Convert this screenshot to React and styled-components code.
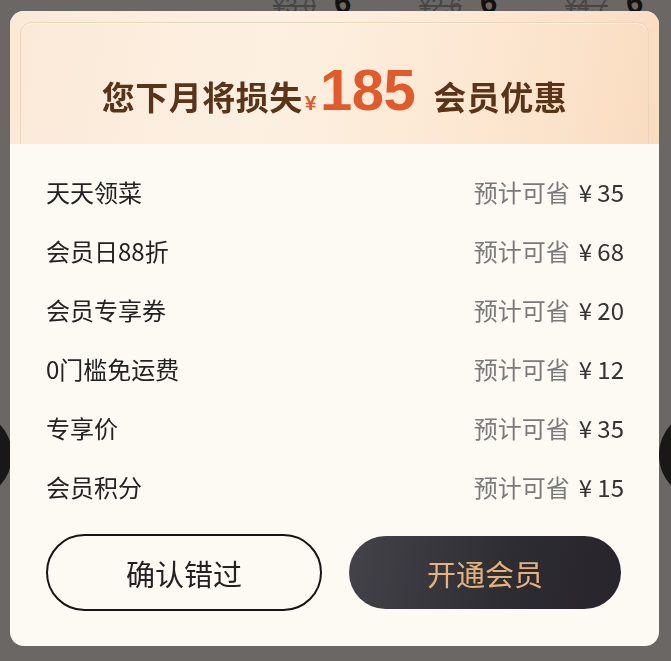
import React from 'react';
import styled, { createGlobalStyle } from 'styled-components';

const GlobalStyle = createGlobalStyle`
  html, body {
    margin: 0;
    padding: 0;
    background: #f6f1ec;
  }
  body {
    font-family: "Noto Sans CJK SC", "Noto Sans", sans-serif;
  }
  * {
    box-sizing: border-box;
  }
`;

const perks = [
  { name: '天天领菜', save: 35 },
  { name: '会员日88折', save: 68 },
  { name: '会员专享券', save: 20 },
  { name: '0门槛免运费', save: 12 },
  { name: '专享价', save: 35 },
  { name: '会员积分', save: 15 },
];

const prices = [
  { old: '¥3.0', now: '6元' },
  { old: '¥2.6', now: '6元' },
  { old: '¥4.7', now: '6元' },
];

const App = () => {
  return (
    <>
      <GlobalStyle />
      <Page>
        <PriceStrip>
          {prices.map((p, i) => (
            <PriceItem key={i}>
              <OldPrice>{p.old}</OldPrice>
              <NowPrice>{p.now}</NowPrice>
            </PriceItem>
          ))}
        </PriceStrip>
        <GoodsRow>
          <RoundButton />
          <RoundButton />
        </GoodsRow>
      </Page>

      <Mask>
        <Modal>
          <Header>
            <HeaderFrame>
              <Title>
                您下月将损失
                <Yen>¥</Yen>
                <Amount>185</Amount>
                会员优惠
              </Title>
            </HeaderFrame>
          </Header>

          <Body>
            <List>
              {perks.map((perk) => (
                <Row key={perk.name}>
                  <PerkName>{perk.name}</PerkName>
                  <Saving>
                    预计可省<SaveValue>¥ {perk.save}</SaveValue>
                  </Saving>
                </Row>
              ))}
            </List>

            <Actions>
              <GhostButton>确认错过</GhostButton>
              <JoinButton>开通会员</JoinButton>
            </Actions>
          </Body>
        </Modal>
      </Mask>
    </>
  );
};

export default App;

// Styled Components
const Page = styled.div`
  height: 661px;
  overflow: hidden;
  display: flex;
  flex-direction: column;
`;

const PriceStrip = styled.div`
  display: flex;
  gap: 40px;
  padding-left: 273px;
  margin-top: -22px;
  height: 60px;
`;

const PriceItem = styled.div`
  display: flex;
  align-items: baseline;
  gap: 18px;
  font-family: "Liberation Sans", sans-serif;
`;

const OldPrice = styled.span`
  font-size: 22px;
  color: #999;
  text-decoration: line-through;
`;

const NowPrice = styled.span`
  font-size: 30px;
  font-weight: 700;
  color: #111;
  font-family: "Noto Sans CJK SC", sans-serif;
`;

const GoodsRow = styled.div`
  display: flex;
  justify-content: space-between;
  margin: 372px -78px 0;
`;

const RoundButton = styled.div`
  width: 90px;
  height: 90px;
  border-radius: 50%;
  background: #222;
`;

const Mask = styled.div`
  position: fixed;
  inset: 0;
  background: rgba(20, 18, 16, 0.62);
  display: flex;
  align-items: flex-start;
  padding: 11px 12px 0 10px;
`;

const Modal = styled.div`
  width: 649px;
  border-radius: 14px;
  overflow: hidden;
  background: #fdfaf4;
  display: flex;
  flex-direction: column;
`;

const Header = styled.div`
  height: 133px;
  padding: 11px 10px 0;
  background: linear-gradient(100deg, #fbe9d8 0%, #fdf0e1 40%, #fce6d0 75%, #f9dcc0 100%);
  display: flex;
`;

const HeaderFrame = styled.div`
  flex: 1;
  border: 1.5px solid #edd5bd;
  border-bottom: none;
  border-radius: 12px 12px 0 0;
  box-shadow: inset 0 1px 0 rgba(255, 255, 255, 0.7);
  display: flex;
  justify-content: center;
  align-items: flex-end;
  padding-bottom: 25px;
`;

const Title = styled.h1`
  margin: 0;
  display: flex;
  align-items: baseline;
  font-size: 33px;
  font-weight: 700;
  color: #5a3418;
  letter-spacing: 0.5px;
  line-height: 1;
`;

const Yen = styled.span`
  font-family: "Liberation Sans", sans-serif;
  font-size: 21px;
  font-weight: 700;
  color: #e25a2a;
  margin: 0 3px 0 2px;
`;

const Amount = styled.span`
  font-family: "Liberation Sans", sans-serif;
  font-size: 58px;
  font-weight: 700;
  color: #e05a2a;
  margin-right: 18px;
  letter-spacing: -0.5px;
`;

const Body = styled.div`
  padding: 18px 35px 35px 36px;
  display: flex;
  flex-direction: column;
`;

const List = styled.div`
  display: flex;
  flex-direction: column;
`;

const Row = styled.div`
  height: 59px;
  display: flex;
  align-items: center;
  justify-content: space-between;
`;

const PerkName = styled.span`
  font-size: 24px;
  color: #222;
`;

const Saving = styled.span`
  font-size: 24px;
  color: #7a7a7a;
  display: flex;
  align-items: baseline;
`;

const SaveValue = styled.span`
  color: #333;
  margin-left: 9px;
`;

const Actions = styled.div`
  margin-top: 18px;
  display: flex;
  align-items: center;
  gap: 27px;
  padding-right: 3px;
`;

const BaseButton = styled.button`
  flex: 1;
  border-radius: 999px;
  font-family: "Noto Sans CJK SC", sans-serif;
  font-size: 29px;
  cursor: pointer;
  display: flex;
  align-items: center;
  justify-content: center;
`;

const GhostButton = styled(BaseButton)`
  height: 77px;
  background: transparent;
  border: 2px solid #151515;
  color: #222;
`;

const JoinButton = styled(BaseButton)`
  height: 73px;
  border: none;
  background: linear-gradient(100deg, #44434a 0%, #2e2c33 60%, #27252b 100%);
  color: #e5b27c;
`;
